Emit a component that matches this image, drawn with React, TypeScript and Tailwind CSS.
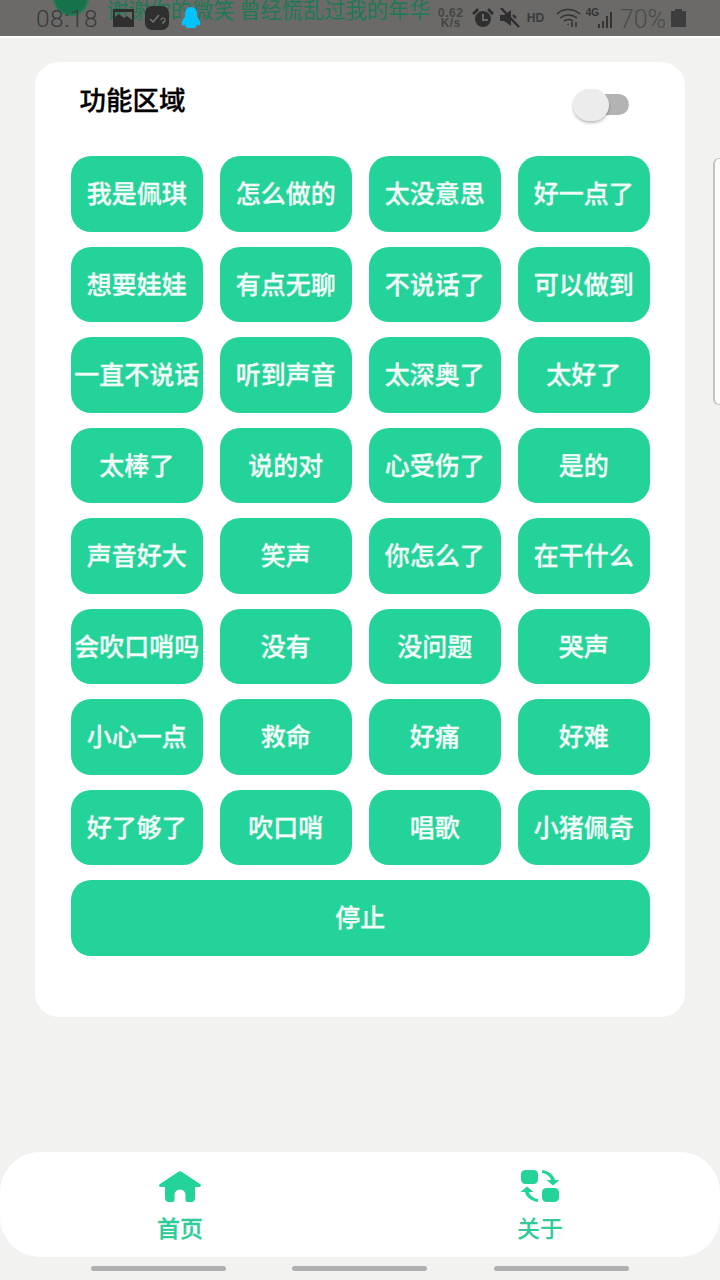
const cjk = "font-['Noto_Sans_CJK_SC','Noto_Sans',sans-serif]";

const sounds = [
  '我是佩琪', '怎么做的', '太没意思', '好一点了',
  '想要娃娃', '有点无聊', '不说话了', '可以做到',
  '一直不说话', '听到声音', '太深奥了', '太好了',
  '太棒了', '说的对', '心受伤了', '是的',
  '声音好大', '笑声', '你怎么了', '在干什么',
  '会吹口哨吗', '没有', '没问题', '哭声',
  '小心一点', '救命', '好痛', '好难',
  '好了够了', '吹口哨', '唱歌', '小猪佩奇',
];

function StatusBar() {
  return (
    <div className="relative h-[38px] shrink-0 overflow-hidden border-b-2 border-white bg-[#6b6a68]">
      {/* notification ticker sliding out underneath the icons */}
      <div className="absolute left-[53px] top-[-20px] size-[36px] rounded-full border-2 border-[#2a7a58] bg-[#17724c]" />
      <div className={`absolute left-[107px] top-[-6px] text-[21.25px] leading-[30px] whitespace-nowrap text-[#1c7a54] ${cjk}`}>
        谢谢你的微笑 曾经慌乱过我的年华
      </div>
      <div className="relative flex h-[36px] items-center pl-[36px] pr-[34px] text-[#3a3a3a]">
        <span className="w-[77px] pt-[2px] font-['Roboto',sans-serif] text-[24.5px] font-light leading-none tracking-[0.5px]">08:18</span>
        <svg width="21" height="18" viewBox="0 0 21 18" className="fill-[#2f2f2f]">
          <path d="M0 0h21v18H0z M2 8l4-3 5 4 3-2 5 4V3H2z" fillRule="evenodd" />
        </svg>
        <svg width="24" height="24" viewBox="0 0 24 24" className="ml-[11px]">
          <rect width="24" height="24" rx="7" fill="#2f2f2f" />
          <path d="M5 13l3 3 6-7" fill="none" stroke="#777" strokeWidth="1.5" />
          <path d="M16 14a2 2 0 1 1 2 2v2" fill="none" stroke="#777" strokeWidth="1.2" />
        </svg>
        <svg width="20" height="22" viewBox="0 0 20 22" className="ml-[12px] fill-[#00c3ff]">
          <path d="M10 0c4 0 6 3 6 7v3c2 2 4 5 3 8-1 1-2 0-3-1 0 2-1 3-2 4H6c-1-1-2-2-2-4-1 1-2 2-3 1-1-3 1-6 3-8V7c0-4 2-7 6-7z" />
        </svg>
        <div className="flex-1" />
        <div className="flex w-[30px] flex-col items-center font-['Liberation_Sans',sans-serif] text-[12px] font-bold leading-[10px] tracking-[0.5px] text-[#454545]">
          <span>0.62</span>
          <span>K/s</span>
        </div>
        <svg width="22" height="20" viewBox="0 0 22 20" className="ml-[6px] fill-[#2f2f2f]">
          <path d="M11 3a8 8 0 1 0 0 16 8 8 0 0 0 0-16zm-1 3h2v5h4v2h-6z" fillRule="evenodd" />
          <path d="M0 5l5-5 2 2-5 5zM22 5l-5-5-2 2 5 5z" />
        </svg>
        <svg width="20" height="20" viewBox="0 0 20 20" className="ml-[6px] fill-[#2f2f2f]">
          <path d="M0 7h4l7-5v16l-7-5H0z" />
          <path d="M13 7l3 3M1 0l18 19" stroke="#2f2f2f" strokeWidth="2.4" fill="none" />
        </svg>
        <span className="ml-[7px] w-[18px] font-['Liberation_Sans',sans-serif] text-[12px] font-bold text-[#3a3a3a]">HD</span>
        <svg width="25" height="20" viewBox="0 0 25 20" className="ml-[11px]" fill="none" stroke="#333" strokeWidth="1.6">
          <path d="M1 6c6-6 16-6 23 0M4 10c5-4 12-4 17 0M8 13c3-2 6-2 9 0" />
          <path d="M12 16v1M16 14v5M20 19v-5" />
        </svg>
        <div className="relative ml-[5px] flex h-[20px] w-[26px] items-end justify-end gap-[2px]">
          <span className="absolute left-0 top-0 font-['Liberation_Sans',sans-serif] text-[10px] font-bold leading-none text-[#333]">4G</span>
          <span className="h-[4px] w-[2px] bg-[#333]" />
          <span className="h-[7px] w-[2px] bg-[#333]" />
          <span className="h-[12px] w-[2px] bg-[#333]" />
          <span className="h-[16px] w-[2px] bg-[#333]" />
        </div>
        <span className="ml-[8px] pt-[2px] font-['Roboto',sans-serif] text-[25px] font-light leading-none text-[#4a4a4a]">70%</span>
        <svg width="15" height="18" viewBox="0 0 15 18" className="ml-[5px] fill-[#3d3d3d]">
          <path d="M4 0h7v2h4v16H0V2h4z" />
        </svg>
      </div>
    </div>
  );
}

function SoundPanel() {
  return (
    <section className="mx-[35px] mt-[24px] rounded-[24px] bg-white pb-[61px] pl-[35.5px] pr-[35px] pt-[21px]">
      <div className="flex h-[32px] items-center justify-between pl-[9px] pr-[21px]">
        <h2 className={`text-[26.5px] font-medium leading-none text-black [-webkit-text-stroke:0.3px_#000] ${cjk}`}>功能区域</h2>
        {/* switch, off */}
        <div className="relative mt-[11px] h-[21px] w-[48px] rounded-full bg-[#b3b3b3]">
          <div className="absolute left-[-8px] top-[-5px] h-[32px] w-[36px] rounded-full bg-[#ececec] shadow-[0_2px_3px_rgba(0,0,0,0.25)]" />
        </div>
      </div>
      <div className="mt-[41px] grid grid-cols-4 gap-x-[16.5px] gap-y-[15px]">
        {sounds.map((label) => (
          <button
            key={label}
            className={`flex h-[75.5px] items-center justify-center whitespace-nowrap rounded-[20px] bg-[#24d399] pb-[2px] text-[25px] font-medium text-[#f2fbf8] [-webkit-text-stroke:0.3px_#f2fbf8] ${cjk}`}
          >
            {label}
          </button>
        ))}
        <button className={`col-span-4 flex h-[75.5px] items-center justify-center rounded-[20px] bg-[#24d399] pb-[2px] text-[25px] font-medium text-[#f2fbf8] [-webkit-text-stroke:0.3px_#f2fbf8] ${cjk}`}>
          停止
        </button>
      </div>
    </section>
  );
}

function BottomNav() {
  return (
    <nav className="grid h-[105px] grid-cols-2 rounded-[40px] bg-white">
      <div className="flex flex-col items-center pt-[19px]">
        <svg width="44" height="32" viewBox="0 0 44 32" className="fill-[#24d399]">
          <path d="M20 1Q22-.3 24 1L42 13Q44.5 15.5 41 16H37V27Q37 31 33 31H29Q27.5 31 27.5 29V24A5.5 5.5 0 0 0 16.5 24V29Q16.5 31 15 31H11Q7 31 7 27V16H3Q-.5 15.5 2 13Z" />
        </svg>
        <span className={`mt-[13px] text-[23px] font-medium leading-none text-[#2fcb98] [-webkit-text-stroke:0.3px_#2fcb98] ${cjk}`}>首页</span>
      </div>
      <div className="flex flex-col items-center pt-[18px]">
        <svg width="40" height="33" viewBox="0 0 40 33" className="fill-[#24d399]">
          <rect x="1" y="0" width="17" height="14" rx="4.5" />
          <rect x="22" y="18" width="17" height="14" rx="4.5" />
          <path d="M22 0C29 1 34 5 35 10H39.5L33 15.5 26.5 10H31C30 6 26 3.5 22 3Z" />
          <path d="M18 32C11 31 6 27 5 22H.5L7 16.5 13.5 22H9C10 26 14 28.5 18 29Z" />
        </svg>
        <span className={`mt-[13px] text-[23px] font-medium leading-none text-[#2fcb98] ${cjk}`}>关于</span>
      </div>
    </nav>
  );
}

export default function App() {
  return (
    <div className="relative flex h-[1280px] w-[720px] flex-col overflow-hidden bg-[#f2f3f1]">
      <StatusBar />
      <SoundPanel />
      {/* tab handle on the right edge */}
      <div className="absolute right-0 top-[158px] h-[247px] w-[7px] rounded-l-[6px] border-y border-l-2 border-[#c4c4c2] bg-[#fcfcfb]" />
      <div className="flex-1" />
      <BottomNav />
      {/* gesture pills */}
      <div className="flex h-[23px] items-start pl-[91px] pt-[9px]">
        <span className="h-[5px] w-[135px] rounded-full bg-[#b0b0b0]" />
        <span className="ml-[66px] h-[5px] w-[135px] rounded-full bg-[#b0b0b0]" />
        <span className="ml-[67px] h-[5px] w-[135px] rounded-full bg-[#b0b0b0]" />
      </div>
    </div>
  );
}
